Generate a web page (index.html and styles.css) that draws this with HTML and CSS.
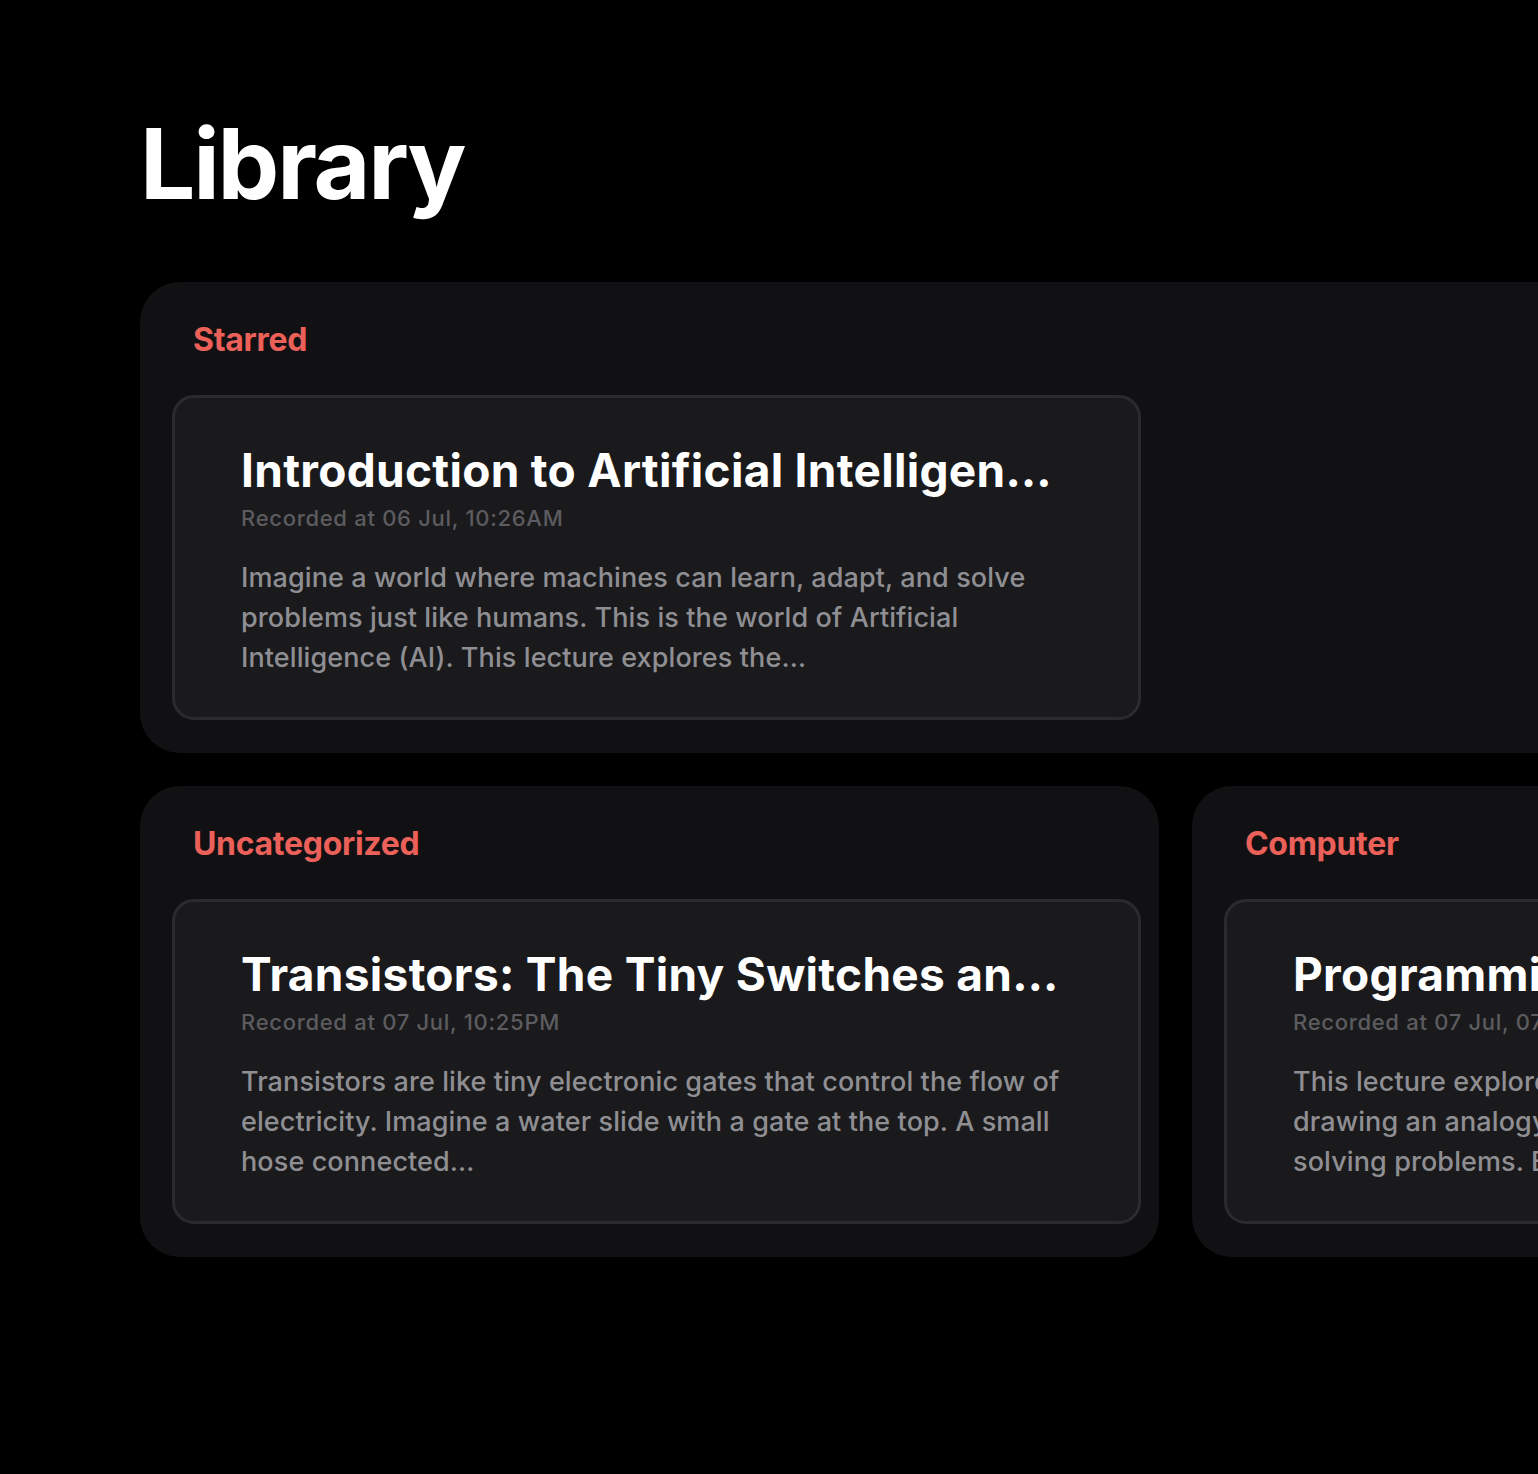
FILE: index.html
```html
<!DOCTYPE html>
<html lang="en">
<head>
<meta charset="utf-8">
<title>Library</title>
<link rel="stylesheet" href="styles.css">
</head>
<body>
<main class="page">
  <h1 class="page-title">Library</h1>
  <div class="grid">
    <section class="panel panel-wide">
      <h2 class="panel-label">Starred</h2>
      <article class="card">
        <h3 class="card-title">Introduction to Artificial Intelligen…</h3>
        <p class="card-date">Recorded at 06 Jul, 10:26AM</p>
        <p class="card-desc">Imagine a world where machines can learn, adapt, and solve problems just like humans. This is the world of Artificial Intelligence (AI). This lecture explores the…</p>
      </article>
    </section>
    <section class="panel">
      <h2 class="panel-label">Uncategorized</h2>
      <article class="card">
        <h3 class="card-title">Transistors: The Tiny Switches an…</h3>
        <p class="card-date">Recorded at 07 Jul, 10:25PM</p>
        <p class="card-desc">Transistors are like tiny electronic gates that control the flow of electricity. Imagine a water slide with a gate at the top. A small hose connected…</p>
      </article>
    </section>
    <section class="panel">
      <h2 class="panel-label">Computer</h2>
      <article class="card">
        <h3 class="card-title">Programming Fundamentals: Thinki…</h3>
        <p class="card-date">Recorded at 07 Jul, 07:42PM</p>
        <p class="card-desc">This lecture explores the fundamental concepts of coding, drawing an analogy between writing a computer program and solving problems. Each step is…</p>
      </article>
    </section>
  </div>
</main>
</body>
</html>
```

FILE: styles.css
```css
html, body {
  margin: 0;
  padding: 0;
  background: #000;
  overflow: hidden;
}

body {
  font-family: Inter, "Noto Sans", "Liberation Sans", sans-serif;
  color: #fff;
}

.page {
  padding: 115px 0 0 140px;
}

.page-title {
  margin: 0 0 69px 0;
  font-size: 98px;
  line-height: 98px;
  font-weight: 700;
  letter-spacing: -2.2px;
  color: #fff;
}

.grid {
  display: grid;
  grid-template-columns: 1019px 1019px;
  column-gap: 33px;
  row-gap: 33px;
  width: 2071px;
}

.panel {
  background: #111113;
  border-radius: 40px;
  padding: 38px 18px 33px 32px;
  height: 471px;
  box-sizing: border-box;
}

.panel-wide {
  grid-column: 1 / span 2;
}

.panel-label {
  margin: 0 0 35px 21px;
  font-size: 32px;
  line-height: 40px;
  font-weight: 700;
  letter-spacing: -0.3px;
  color: #ec605a;
}

.card {
  width: 969px;
  box-sizing: border-box;
  background: #1a1a1c;
  border: 3px solid #2b2b2e;
  border-radius: 22px;
  padding: 45px 66px 39px 66px;
}

.card-title {
  margin: 0;
  font-size: 46px;
  line-height: 54px;
  font-weight: 700;
  letter-spacing: 0.3px;
  color: #fff;
  white-space: nowrap;
  overflow: hidden;
  text-overflow: ellipsis;
}

.card-date {
  margin: 7px 0 0 0;
  font-size: 22px;
  line-height: 28px;
  font-weight: 500;
  letter-spacing: 0.7px;
  color: #5c5c60;
}

.card-desc {
  margin: 26px 0 0 0;
  font-size: 27px;
  line-height: 40px;
  font-weight: 500;
  letter-spacing: 0.1px;
  color: #8f8f93;
  height: 120px;
  overflow: hidden;
}
```
